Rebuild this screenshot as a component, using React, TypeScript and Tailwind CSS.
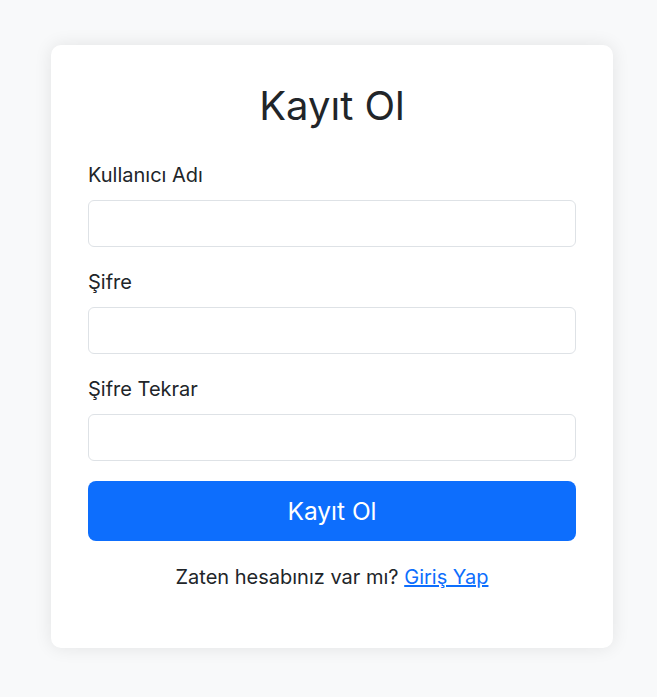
const Field = ({ label, type = 'text' }: { label: string; type?: string }) => {
  return (
    <div className="mb-[20px]">
      <label className="mb-[10px] block text-[20px] leading-[30px]">{label}</label>
      <input
        type={type}
        className="block h-[47px] w-full rounded-[6px] border border-[#dee2e6] bg-white px-3 outline-none"
      />
    </div>
  )
}

export default function App() {
  return (
    <div
      className="min-h-[697px] bg-[#f8f9fa] pt-[45px] text-[#212529]"
      style={{ fontFamily: 'Inter, "Noto Sans", sans-serif' }}
    >
      <div className="ml-[51px] w-[562px] rounded-[10px] bg-white px-[37px] pt-[37px] pb-[56px] shadow-[0_0_18px_rgba(0,0,0,0.09)]">
        <h1 className="mb-[30px] text-center text-[40px] leading-[48px] font-normal">Kayıt Ol</h1>
        <Field label="Kullanıcı Adı" />
        <Field label="Şifre" type="password" />
        <Field label="Şifre Tekrar" type="password" />
        <button className="block h-[60px] w-full rounded-[8px] bg-[#0d6efd] text-[24.5px] text-white">
          Kayıt Ol
        </button>
        <p className="mt-[21px] text-center text-[20px] leading-[30px]">
          Zaten hesabınız var mı?{' '}
          <a href="#" className="text-[#0d6efd] underline">
            Giriş Yap
          </a>
        </p>
      </div>
    </div>
  )
}
